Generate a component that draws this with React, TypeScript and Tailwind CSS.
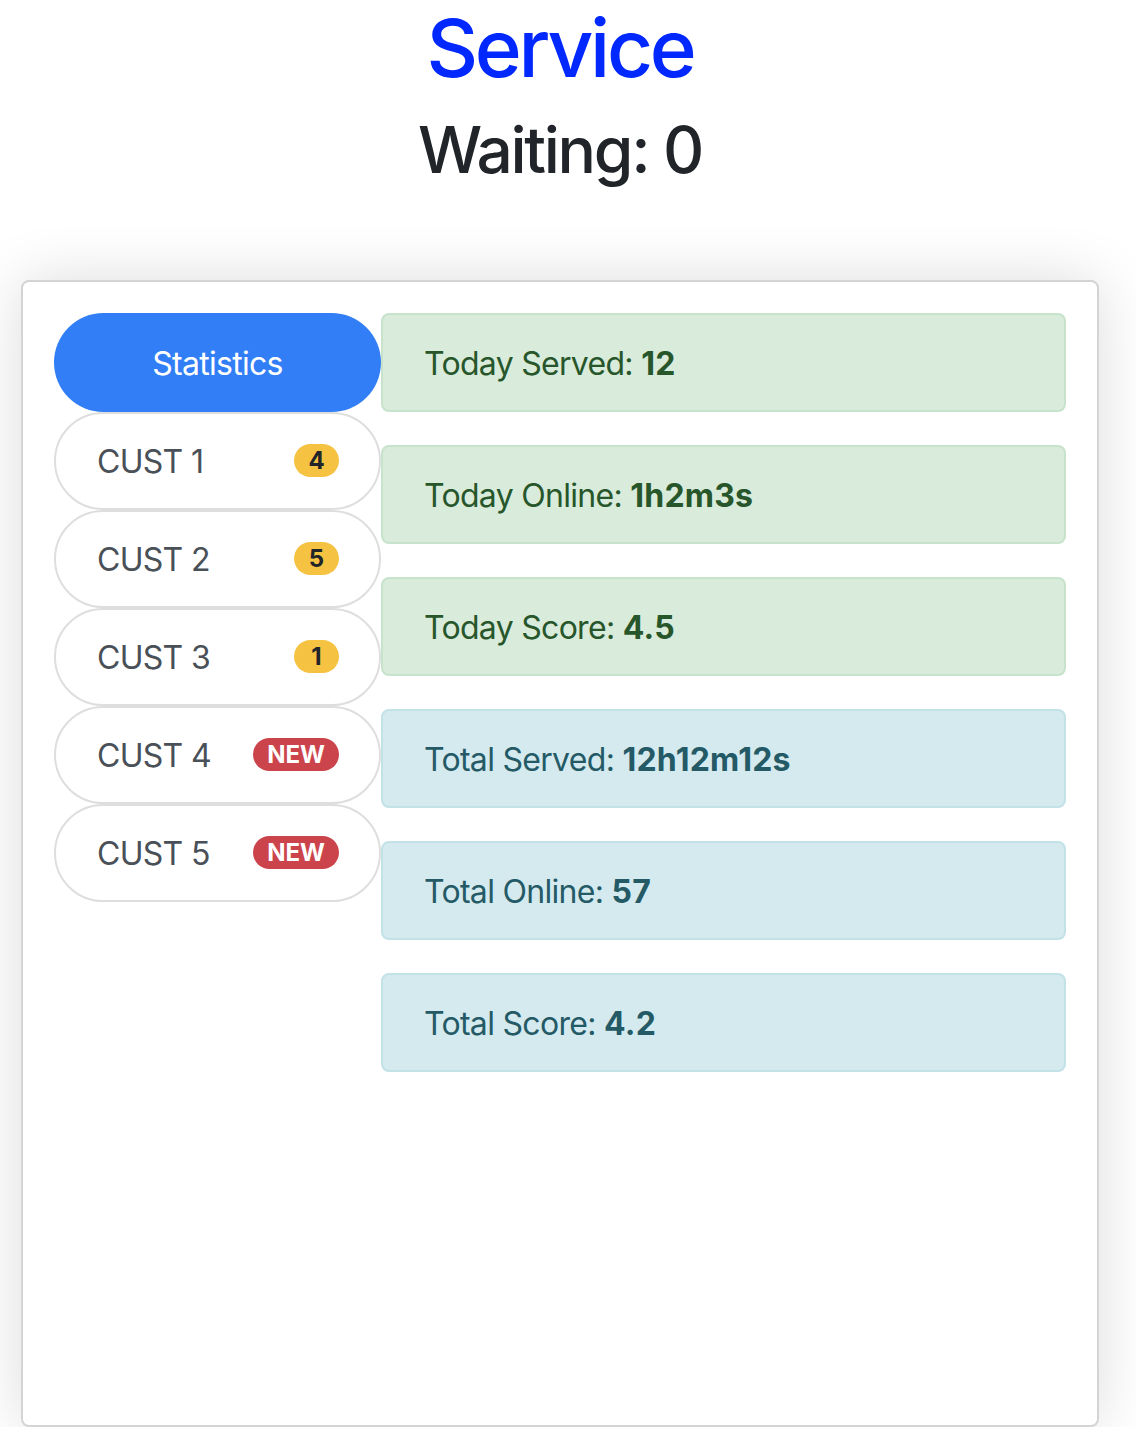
import React from 'react';

type Cust = { name: string; badge: string; kind: 'count' | 'new' };

const customers: Cust[] = [
  { name: 'CUST 1', badge: '4', kind: 'count' },
  { name: 'CUST 2', badge: '5', kind: 'count' },
  { name: 'CUST 3', badge: '1', kind: 'count' },
  { name: 'CUST 4', badge: 'NEW', kind: 'new' },
  { name: 'CUST 5', badge: 'NEW', kind: 'new' },
];

const stats = [
  { label: 'Today Served:', value: '12', tone: 'success' },
  { label: 'Today Online:', value: '1h2m3s', tone: 'success' },
  { label: 'Today Score:', value: '4.5', tone: 'success' },
  { label: 'Total Served:', value: '12h12m12s', tone: 'info' },
  { label: 'Total Online:', value: '57', tone: 'info' },
  { label: 'Total Score:', value: '4.2', tone: 'info' },
];

export default function App() {
  return (
    <div
      className="w-[1120px] bg-white text-[#212529]"
      style={{ fontFamily: 'Inter, "Liberation Sans", Arial, sans-serif' }}
    >
      {/* Header */}
      <h1 className="text-center text-[80px] leading-[1.2] font-medium text-[#0028ff] tracking-[-3.3px]">
        Service
      </h1>
      <h2 className="mt-4 text-center text-[64px] leading-[1.2] font-medium text-[#212529] tracking-[-2.3px]">
        Waiting: 0
      </h2>

      {/* Card */}
      <div className="mx-[21px] mt-[91px] h-[1147px] rounded-[8px] border-2 border-[#d4d4d4] bg-white shadow-[0_0_60px_rgba(0,0,0,0.14)] pl-[31px] pr-[31px] pt-[31px] tracking-[-0.7px]">
        <div className="flex">
          {/* Nav pills */}
          <div className="w-[327px] flex flex-col">
            <div className="h-[99px] rounded-full bg-[#317ef6] text-white text-[32px] flex items-center justify-center pt-[3px]">
              Statistics
            </div>
            {customers.map((c) => (
              <div
                key={c.name}
                className="h-[98px] rounded-full border-2 border-[#dedede] bg-white flex items-center justify-between pl-[41px] pr-[40px] text-[32px] text-[#495057]"
              >
                <span className="pt-[3px]">{c.name}</span>
                <span
                  className={
                    c.kind === 'new'
                      ? 'h-[33px] px-[14px] rounded-full bg-[#cc444b] text-white text-[24px] font-bold leading-none flex items-center tracking-[0px]'
                      : 'h-[33px] min-w-[45px] px-[13px] rounded-full bg-[#f5c242] text-[#212529] text-[24px] font-bold leading-none flex items-center justify-center tracking-[0px]'
                  }
                >
                  {c.badge}
                </span>
              </div>
            ))}
          </div>

          {/* Stat alerts */}
          <div className="w-[685px] flex flex-col gap-[33px]">
            {stats.map((s) => (
              <div
                key={s.label}
                className={
                  s.tone === 'success'
                    ? 'h-[99px] rounded-[8px] border-2 border-[#c8e3cc] bg-[#d9ebdb] text-[#27562b] text-[32px] flex items-center px-[41px] pt-[3px]'
                    : 'h-[99px] rounded-[8px] border-2 border-[#c2e2e8] bg-[#d5eaef] text-[#245a66] text-[32px] flex items-center px-[41px] pt-[3px]'
                }
              >
                <span>
                  {s.label} <b className="font-bold tracking-[0.2px]">{s.value}</b>
                </span>
              </div>
            ))}
          </div>
        </div>
      </div>
    </div>
  );
}
